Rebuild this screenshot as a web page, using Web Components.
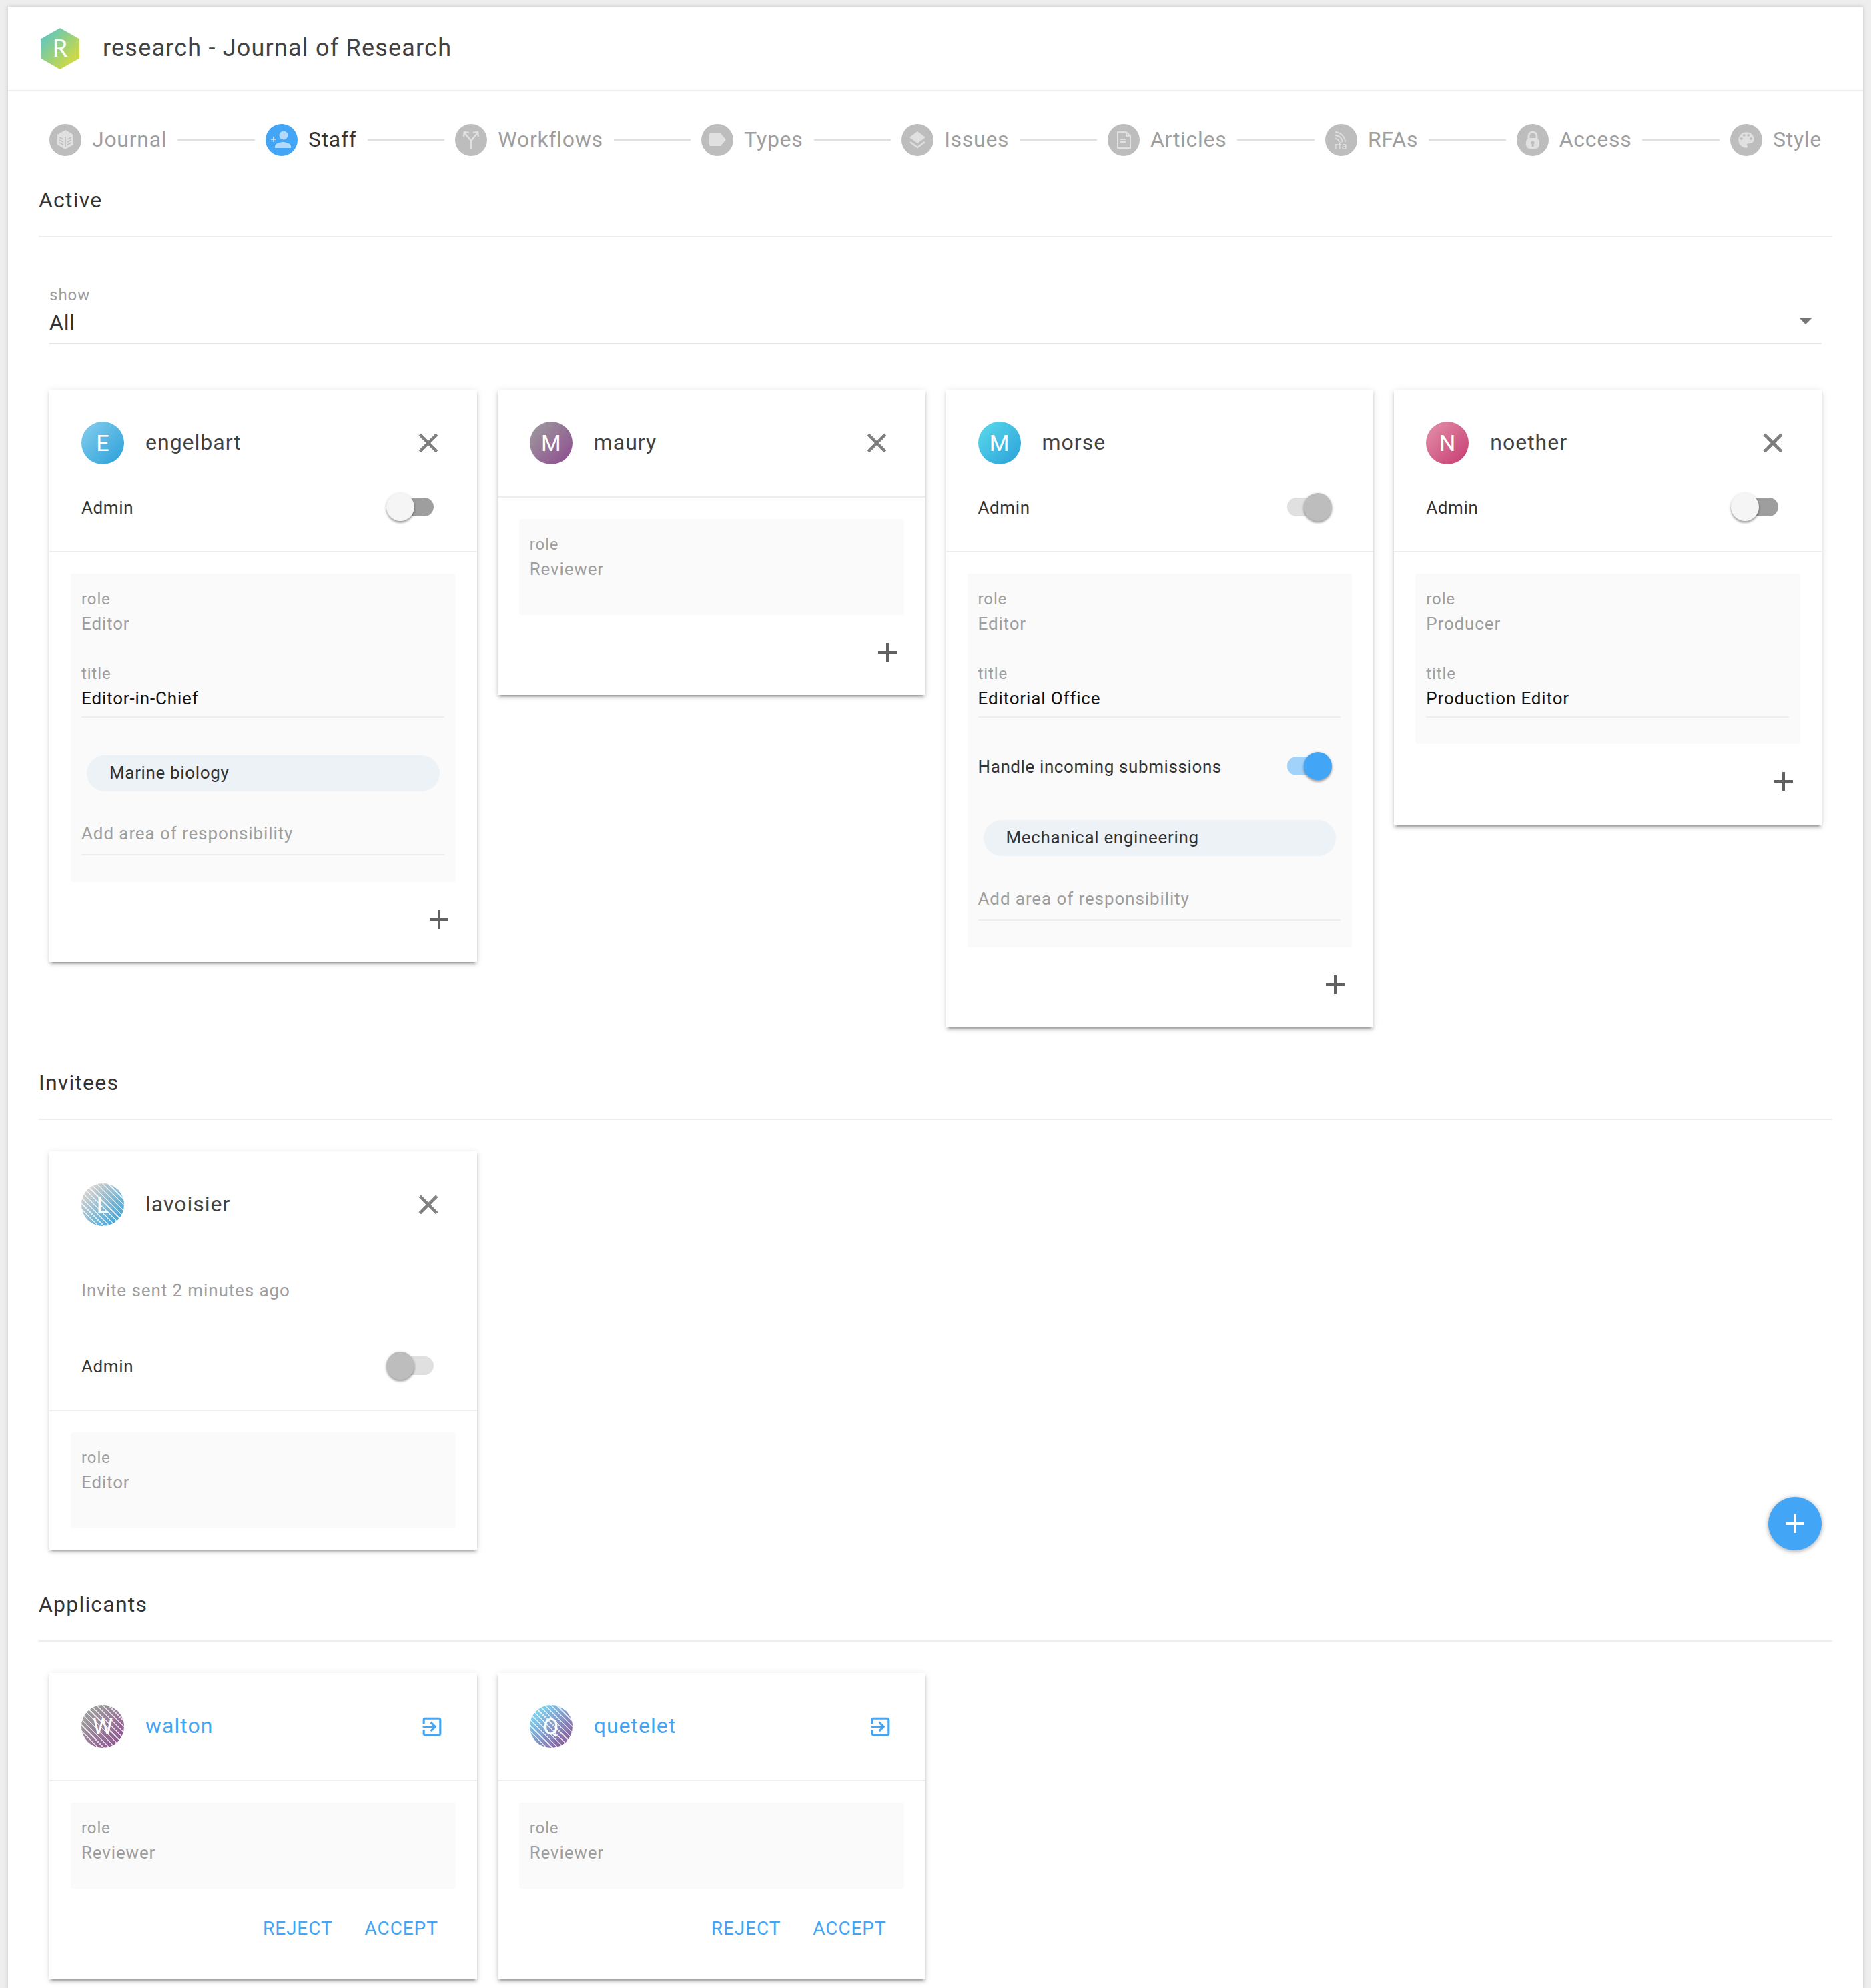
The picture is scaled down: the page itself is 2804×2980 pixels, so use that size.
<!DOCTYPE html>
<html lang="en">
<head>
<meta charset="utf-8">
<title>research - Journal of Research</title>
<style>
  html, body { margin: 0; background: #eeeeee; }
  body { font-family: Roboto, "Liberation Sans", sans-serif; color: #333333; }
</style>
</head>
<body>
<jr-shell title-text="research - Journal of Research">
  <jr-stepper>
    <jr-step label="Journal">
      <svg viewBox="0 0 48 48"><path d="M24 9l12 7v15l-12 7-12-7V16z" fill="#e0e0e0"/><path d="M24 19v15M15 20l6 3M15 24l6 3M15 28l6 3M33 20l-6 3M33 24l-6 3M33 28l-6 3" stroke="#bdbdbd" stroke-width="1.6" fill="none"/></svg>
    </jr-step>
    <jr-step label="Staff" active>
      <svg viewBox="0 0 48 48"><circle cx="27" cy="17" r="6.5" fill="#b3dafb"/><path d="M14 36v-2c0-5 8-7 12-7s12 2 12 7v2z" fill="#b3dafb"/><path d="M8 23h8M12 19v8" stroke="#b3dafb" stroke-width="2" fill="none"/></svg>
    </jr-step>
    <jr-step label="Workflows">
      <svg viewBox="0 0 48 48"><path d="M24 38V25L14 13M24 25l10-12M13 19l1-7 7 1M35 19l-1-7-7 1" stroke="#e0e0e0" stroke-width="2.6" fill="none"/></svg>
    </jr-step>
    <jr-step label="Types">
      <svg viewBox="0 0 48 48"><path d="M14 14h14a2 2 0 0 1 1.6.8L37 23.5l-7.4 8.7a2 2 0 0 1-1.6.8H14a2 2 0 0 1-2-2V16a2 2 0 0 1 2-2z" fill="#e0e0e0"/></svg>
    </jr-step>
    <jr-step label="Issues">
      <svg viewBox="0 0 48 48"><path d="M24 11l12 9-12 9-12-9z" fill="#e0e0e0"/><path d="M13 27l11 8 11-8" stroke="#e0e0e0" stroke-width="2.6" fill="none"/></svg>
    </jr-step>
    <jr-step label="Articles">
      <svg viewBox="0 0 48 48"><path d="M15 12h13l6 6v18H15zM28 12v6h6M19 23h8M19 27h8" stroke="#e0e0e0" stroke-width="2" fill="none"/></svg>
    </jr-step>
    <jr-step label="RFAs">
      <svg viewBox="0 0 48 48"><path d="M15 22a6 6 0 0 1 6 5M15 17a11 11 0 0 1 11 10M15 12a16 16 0 0 1 15 15" stroke="#e0e0e0" stroke-width="1.8" fill="none"/><text x="14" y="38" font-family="Roboto, sans-serif" font-size="15" fill="#e0e0e0">rfa</text></svg>
    </jr-step>
    <jr-step label="Access">
      <svg viewBox="0 0 48 48"><path d="M18 23v-5a6 6 0 0 1 12 0v5" stroke="#e0e0e0" stroke-width="3" fill="none"/><rect x="14" y="21" width="20" height="16" rx="6" fill="#e0e0e0"/><circle cx="24" cy="28" r="2.6" fill="#bdbdbd"/><path d="M23 28h2l.6 6h-3.2z" fill="#bdbdbd"/></svg>
    </jr-step>
    <jr-step label="Style">
      <svg viewBox="0 0 48 48"><path transform="translate(8.4 8.4) scale(1.3)" fill="#e0e0e0" d="M12 3c-4.97 0-9 4.03-9 9s4.03 9 9 9c.83 0 1.5-.67 1.5-1.5 0-.39-.15-.74-.39-1.01-.23-.26-.38-.61-.38-.99 0-.83.67-1.5 1.5-1.5H16c2.76 0 5-2.24 5-5 0-4.42-4.03-8-9-8zm-5.5 9c-.83 0-1.5-.67-1.5-1.5S5.67 9 6.5 9 8 9.67 8 10.5 7.33 12 6.5 12zm3-4C8.67 8 8 7.33 8 6.5S8.67 5 9.5 5s1.5.67 1.5 1.5S10.33 8 9.5 8zm5 0c-.83 0-1.5-.67-1.5-1.5S13.67 5 14.5 5s1.5.67 1.5 1.5S15.33 8 14.5 8zm3 4c-.83 0-1.5-.67-1.5-1.5S16.67 9 17.5 9s1.5.67 1.5 1.5-.67 1.5-1.5 1.5z"/></svg>
    </jr-step>
  </jr-stepper>

  <jr-section heading="Active" style="margin-top:42px">
    <jr-select label="show" value="All"></jr-select>
    <jr-card-grid style="margin-top:68px">
      <jr-card name="engelbart" initial="E" from="#86cfee" to="#2a9fd8" action="close">
        <jr-row slot="top" label="Admin" state="off"></jr-row>
        <jr-panel style="--pb:40px">
          <jr-field label="role" value="Editor"></jr-field>
          <jr-field label="title" value="Editor-in-Chief" editable></jr-field>
          <jr-chip text="Marine biology"></jr-chip>
          <jr-add text="Add area of responsibility"></jr-add>
        </jr-panel>
        <jr-add-button slot="footer"></jr-add-button>
      </jr-card>
      <jr-card name="maury" initial="M" from="#9e9e9e" to="#8e4a90" action="close">
        <jr-panel style="--pb:49px">
          <jr-field label="role" value="Reviewer"></jr-field>
        </jr-panel>
        <jr-add-button slot="footer"></jr-add-button>
      </jr-card>
      <jr-card name="morse" initial="M" from="#5adcec" to="#2a9fd8">
        <jr-row slot="top" label="Admin" state="disabled-on"></jr-row>
        <jr-panel style="--pb:40px">
          <jr-field label="role" value="Editor"></jr-field>
          <jr-field label="title" value="Editorial Office" editable></jr-field>
          <jr-row inset label="Handle incoming submissions" state="on" style="margin-top:40px"></jr-row>
          <jr-chip text="Mechanical engineering" style="margin-top:49px"></jr-chip>
          <jr-add text="Add area of responsibility" style="margin-top:46px"></jr-add>
        </jr-panel>
        <jr-add-button slot="footer"></jr-add-button>
      </jr-card>
      <jr-card name="noether" initial="N" from="#e493ac" to="#c63a70" action="close">
        <jr-row slot="top" label="Admin" state="off"></jr-row>
        <jr-panel style="--pb:39px">
          <jr-field label="role" value="Producer"></jr-field>
          <jr-field label="title" value="Production Editor" editable></jr-field>
        </jr-panel>
        <jr-add-button slot="footer" style="padding-bottom:42px"></jr-add-button>
      </jr-card>
    </jr-card-grid>
  </jr-section>

  <jr-section heading="Invitees" style="margin-top:59px">
    <jr-card-grid style="margin-top:47px">
      <jr-card name="lavoisier" initial="L" from="#d0d0d0" to="#2a9fd8" striped action="close">
        <jr-note slot="top" text="Invite sent 2 minutes ago"></jr-note>
        <jr-row slot="top" label="Admin" state="disabled-off" style="margin-top:61px"></jr-row>
        <jr-panel style="--pb:49px">
          <jr-field label="role" value="Editor"></jr-field>
        </jr-panel>
      </jr-card>
    </jr-card-grid>
    <jr-fab></jr-fab>
  </jr-section>

  <jr-section heading="Applicants" style="margin-top:58px">
    <jr-card-grid style="margin-top:47px">
      <jr-card name="walton" initial="W" from="#9e9e9e" to="#8e4a90" striped link action="enter">
        <jr-panel style="--pb:34px">
          <jr-field label="role" value="Reviewer"></jr-field>
        </jr-panel>
        <jr-actions slot="footer"></jr-actions>
      </jr-card>
      <jr-card name="quetelet" initial="Q" from="#7fd0ee" to="#8e4a90" striped link action="enter">
        <jr-panel style="--pb:34px">
          <jr-field label="role" value="Reviewer"></jr-field>
        </jr-panel>
        <jr-actions slot="footer"></jr-actions>
      </jr-card>
    </jr-card-grid>
  </jr-section>
</jr-shell>

<script>
const ICONS = {
  close: 'M19 6.41L17.59 5 12 10.59 6.41 5 5 6.41 10.59 12 5 17.59 6.41 19 12 13.41 17.59 19 19 17.59 13.41 12z',
  plus: 'M19 13h-6v6h-2v-6H5v-2h6V5h2v6h6v2z',
  enter: 'M10.09 15.59L11.5 17l5-5-5-5-1.41 1.41L12.67 11H3v2h9.67l-2.58 2.59zM19 3H5c-1.11 0-2 .9-2 2v4h2V5h14v14H5v-4H3v4c0 1.1.89 2 2 2h14c1.1 0 2-.9 2-2V5c0-1.1-.9-2-2-2z'
}

class Base extends HTMLElement {
  constructor () {
    super()
    this.shadow = this.attachShadow({ mode: 'open' })
  }

  connectedCallback () {
    this.render()
  }
}

class Shell extends Base {
  render () {
    this.shadow.innerHTML = /* html */`
      <style>
        :host { display: block; margin: 10px 12px 0; padding-bottom: 14px; background: #fff; box-shadow: 0 0 6px rgba(0, 0, 0, .18); }
        header { display: flex; align-items: center; gap: 34px; height: 125px; padding-left: 48px; border-bottom: 2px solid #eeeeee; }
        svg { width: 60px; height: 64px; display: block; }
        h1 { margin: 0 0 2px; font-size: 36px; font-weight: 400; letter-spacing: 1.2px; color: #424242; }
        main { display: block; }
      </style>
      <header>
        <svg viewBox="0 0 60 64">
          <defs><linearGradient id="logo" x1="0" y1="0" x2="1" y2="1"><stop offset=".08" stop-color="#58c6c6"/><stop offset=".78" stop-color="#c8d84a"/></linearGradient></defs>
          <path d="M30 1l29 16.5v29L30 63 1 46.5v-29z" fill="url(#logo)"/>
          <text x="30" y="44" text-anchor="middle" font-family="Lato, sans-serif" font-size="36" fill="#fff">R</text>
        </svg>
        <h1>${this.getAttribute('title-text')}</h1>
      </header>
      <main><slot></slot></main>
    `
  }
}

class Stepper extends Base {
  render () {
    this.shadow.innerHTML = /* html */`
      <style>
        :host { display: flex; align-items: center; margin-top: 49px; padding: 0 62px; }
      </style>
      <slot></slot>
    `
  }
}

class Step extends Base {
  render () {
    const active = this.hasAttribute('active')
    const last = !this.nextElementSibling
    this.shadow.innerHTML = /* html */`
      <style>
        :host { display: flex; align-items: center; flex: ${last ? '0 0 auto' : '1 1 auto'}; }
        .dot { width: 48px; height: 48px; border-radius: 50%; background: ${active ? '#42a5f5' : '#bdbdbd'}; flex: none; }
        ::slotted(svg) { width: 48px; height: 48px; display: block; }
        .label { margin: 0 0 2px 16px; font-size: 32px; line-height: 46px; letter-spacing: .72px; color: ${active ? '#333333' : '#9e9e9e'}; white-space: nowrap; }
        .line { flex: 1; height: 2px; margin: 0 16px; background: #e0e0e0; display: ${last ? 'none' : 'block'}; }
      </style>
      <div class="dot"><slot></slot></div>
      <span class="label">${this.getAttribute('label')}</span>
      <span class="line"></span>
    `
  }
}

class Section extends Base {
  render () {
    this.shadow.innerHTML = /* html */`
      <style>
        :host { display: block; position: relative; margin: 0 46px; }
        h2 { margin: 0; padding-bottom: 30px; font-size: 32px; font-weight: 400; line-height: 48px; letter-spacing: 1.2px; color: #333333; border-bottom: 2px solid #eeeeee; }
        .body { padding: 0 16px; }
      </style>
      <h2>${this.getAttribute('heading')}</h2>
      <div class="body"><slot></slot></div>
    `
  }
}

class Select extends Base {
  render () {
    this.shadow.innerHTML = /* html */`
      <style>
        :host { display: block; margin-top: 70px; padding-bottom: 10px; border-bottom: 2px solid #e6e6e6; }
        .label { font-size: 24px; line-height: 32px; letter-spacing: 1px; color: #9e9e9e; }
        .row { display: flex; align-items: center; justify-content: space-between; margin-top: 4px; padding-right: 14px; }
        .value { font-size: 32px; line-height: 42px; letter-spacing: .75px; color: #333333; }
        .caret { width: 0; height: 0; margin-bottom: 4px; border: 10px solid transparent; border-top-color: #757575; border-bottom: 0; }
      </style>
      <div class="label">${this.getAttribute('label')}</div>
      <div class="row"><span class="value">${this.getAttribute('value')}</span><span class="caret"></span></div>
    `
  }
}

class CardGrid extends Base {
  render () {
    this.shadow.innerHTML = /* html */`
      <style>
        :host { display: grid; grid-template-columns: repeat(4, 1fr); column-gap: 31px; align-items: start; }
      </style>
      <slot></slot>
    `
  }
}

class Card extends Base {
  render () {
    const link = this.hasAttribute('link')
    const striped = this.hasAttribute('striped')
    const from = this.getAttribute('from')
    const to = this.getAttribute('to')
    const action = this.getAttribute('action')
    const hasTop = !!this.querySelector('[slot="top"]')
    const hasFooter = !!this.querySelector('[slot="footer"]')
    const stripes = 'repeating-linear-gradient(45deg, transparent 0 4.6px, rgba(255, 255, 255, .72) 4.6px 6.2px), '
    const icon = action
      ? `<svg class="${action}" viewBox="0 0 24 24"><path d="${ICONS[action]}"/></svg>`
      : ''
    this.shadow.innerHTML = /* html */`
      <style>
        :host { display: block; min-width: 0; background: #fff; padding-top: 48px; padding-bottom: ${hasFooter ? '0' : '32px'};
          box-shadow: 0 6px 2px -4px rgba(0, 0, 0, .2), 0 4px 4px 0 rgba(0, 0, 0, .14), 0 2px 10px 0 rgba(0, 0, 0, .12); }
        .head { display: flex; align-items: center; padding: 0 49px 0 48px; }
        .avatar { width: 64px; height: 64px; border-radius: 50%; flex: none; display: flex; align-items: center; justify-content: center;
          font-size: 34px; color: #fff; background: ${striped ? stripes : ''}linear-gradient(135deg, ${from} ${striped ? '18%' : '0%'}, ${to}); }
        .name { flex: 1; margin: 0 0 2px 32px; font-size: 32px; line-height: 62px; letter-spacing: 1px; color: ${link ? '#42a5f5' : '#424242'}; }
        svg { display: block; flex: none; }
        svg.close { width: 48px; height: 48px; fill: #808080; stroke: #808080; stroke-width: .45; }
        svg.enter { width: 37px; height: 37px; fill: #42a5f5; }
        .top { padding: 0 62px 34px 48px; }
        .top.empty { padding: 0; height: 48px; }
        .sep { height: 2px; background: #eeeeee; margin-bottom: 32px; }
        .body { padding: 0 32px; }
      </style>
      <div class="head">
        <div class="avatar">${this.getAttribute('initial')}</div>
        <div class="name">${this.getAttribute('name')}</div>
        ${icon}
      </div>
      <div class="top ${hasTop ? '' : 'empty'}"><slot name="top"></slot></div>
      <div class="sep"></div>
      <div class="body"><slot></slot></div>
      <slot name="footer"></slot>
    `
  }
}

class Row extends Base {
  render () {
    const inset = this.hasAttribute('inset')
    this.shadow.innerHTML = /* html */`
      <style>
        :host { display: flex; align-items: center; justify-content: space-between; height: 64px; margin-top: 32px; ${inset ? 'padding-right: 13px;' : ''} }
        span { padding-top: 2px; font-size: 26px; letter-spacing: .6px; color: #333333; }
      </style>
      <span>${this.getAttribute('label')}</span>
      <jr-toggle state="${this.getAttribute('state')}"></jr-toggle>
    `
  }
}

class Toggle extends Base {
  render () {
    const looks = {
      off: { track: '#9e9e9e', thumb: '#f5f5f5', left: 0 },
      on: { track: '#a1d2fa', thumb: '#42a5f5', left: 32 },
      'disabled-on': { track: '#e0e0e0', thumb: '#bdbdbd', left: 32 },
      'disabled-off': { track: '#e0e0e0', thumb: '#bdbdbd', left: 0 }
    }
    const look = looks[this.getAttribute('state')]
    this.shadow.innerHTML = /* html */`
      <style>
        :host { display: block; position: relative; width: 74px; height: 44px; flex: none; }
        .track { position: absolute; left: 7px; right: 3px; top: 8px; height: 28px; border-radius: 14px; background: ${look.track}; }
        .thumb { position: absolute; left: ${look.left}px; top: 1px; width: 42px; height: 42px; border-radius: 50%; background: ${look.thumb};
          box-shadow: 0 3px 3px rgba(0, 0, 0, .25), 0 1px 4px rgba(0, 0, 0, .2); }
      </style>
      <div class="track"></div>
      <div class="thumb"></div>
    `
  }
}

class Panel extends Base {
  render () {
    this.shadow.innerHTML = /* html */`
      <style>
        :host { display: block; background: #fafafa; border-radius: 4px; padding: 22px 17px var(--pb, 40px) 16px; }
      </style>
      <slot></slot>
    `
  }
}

class Field extends Base {
  render () {
    const editable = this.hasAttribute('editable')
    this.shadow.innerHTML = /* html */`
      <style>
        :host { display: block; }
        :host([editable]) { margin-top: 39px; padding-bottom: 7px; border-bottom: 2px solid #eeeeee; }
        .label { font-size: 24px; line-height: 32px; letter-spacing: .9px; color: #9e9e9e; }
        .value { margin-top: 1px; font-size: 26px; line-height: 40px; letter-spacing: .85px; color: ${editable ? '#111111' : '#9e9e9e'}; }
      </style>
      <div class="label">${this.getAttribute('label')}</div>
      <div class="value">${this.getAttribute('value')}</div>
    `
  }
}

class Chip extends Base {
  render () {
    this.shadow.innerHTML = /* html */`
      <style>
        :host { display: block; margin: 56px 7px 0 8px; height: 54px; line-height: 52px; padding-left: 34px; border-radius: 27px; background: #edf2f7;
          font-size: 26px; letter-spacing: .65px; color: #333333; }
      </style>
      <span>${this.getAttribute('text')}</span>
    `
  }
}

class Add extends Base {
  render () {
    this.shadow.innerHTML = /* html */`
      <style>
        :host { display: block; margin-top: 45px; padding-bottom: 13px; border-bottom: 2px solid #eeeeee;
          font-size: 26px; line-height: 36px; letter-spacing: .9px; color: #9e9e9e; }
      </style>
      <span>${this.getAttribute('text')}</span>
    `
  }
}

class Note extends Base {
  render () {
    this.shadow.innerHTML = /* html */`
      <style>
        :host { display: block; margin-top: 76px; font-size: 26px; line-height: 40px; letter-spacing: .9px; color: #9e9e9e; }
      </style>
      <span>${this.getAttribute('text')}</span>
    `
  }
}

class AddButton extends Base {
  render () {
    this.shadow.innerHTML = /* html */`
      <style>
        :host { display: flex; justify-content: flex-end; padding: 32px 33px 40px 0; }
        svg { width: 48px; height: 48px; fill: #616161; display: block; }
      </style>
      <svg viewBox="0 0 24 24"><path d="${ICONS.plus}"/></svg>
    `
  }
}

class Actions extends Base {
  render () {
    this.shadow.innerHTML = /* html */`
      <style>
        :host { display: flex; justify-content: flex-end; gap: 48px; padding: 40px 58px 56px 0; }
        span { font-size: 28px; line-height: 40px; letter-spacing: .9px; color: #42a5f5; }
      </style>
      <span>REJECT</span><span>ACCEPT</span>
    `
  }
}

class Fab extends Base {
  render () {
    this.shadow.innerHTML = /* html */`
      <style>
        :host { position: absolute; right: 16px; bottom: -1px; width: 80px; height: 80px; border-radius: 50%; background: #42a5f5; display: flex; align-items: center; justify-content: center;
          box-shadow: 0 2px 6px rgba(0, 0, 0, .25), 0 0 8px rgba(0, 0, 0, .12); }
        svg { width: 48px; height: 48px; fill: #fff; display: block; }
      </style>
      <svg viewBox="0 0 24 24"><path d="${ICONS.plus}"/></svg>
    `
  }
}

customElements.define('jr-shell', Shell)
customElements.define('jr-stepper', Stepper)
customElements.define('jr-step', Step)
customElements.define('jr-section', Section)
customElements.define('jr-select', Select)
customElements.define('jr-card-grid', CardGrid)
customElements.define('jr-card', Card)
customElements.define('jr-row', Row)
customElements.define('jr-toggle', Toggle)
customElements.define('jr-panel', Panel)
customElements.define('jr-field', Field)
customElements.define('jr-chip', Chip)
customElements.define('jr-add', Add)
customElements.define('jr-note', Note)
customElements.define('jr-add-button', AddButton)
customElements.define('jr-actions', Actions)
customElements.define('jr-fab', Fab)
</script>
</body>
</html>
